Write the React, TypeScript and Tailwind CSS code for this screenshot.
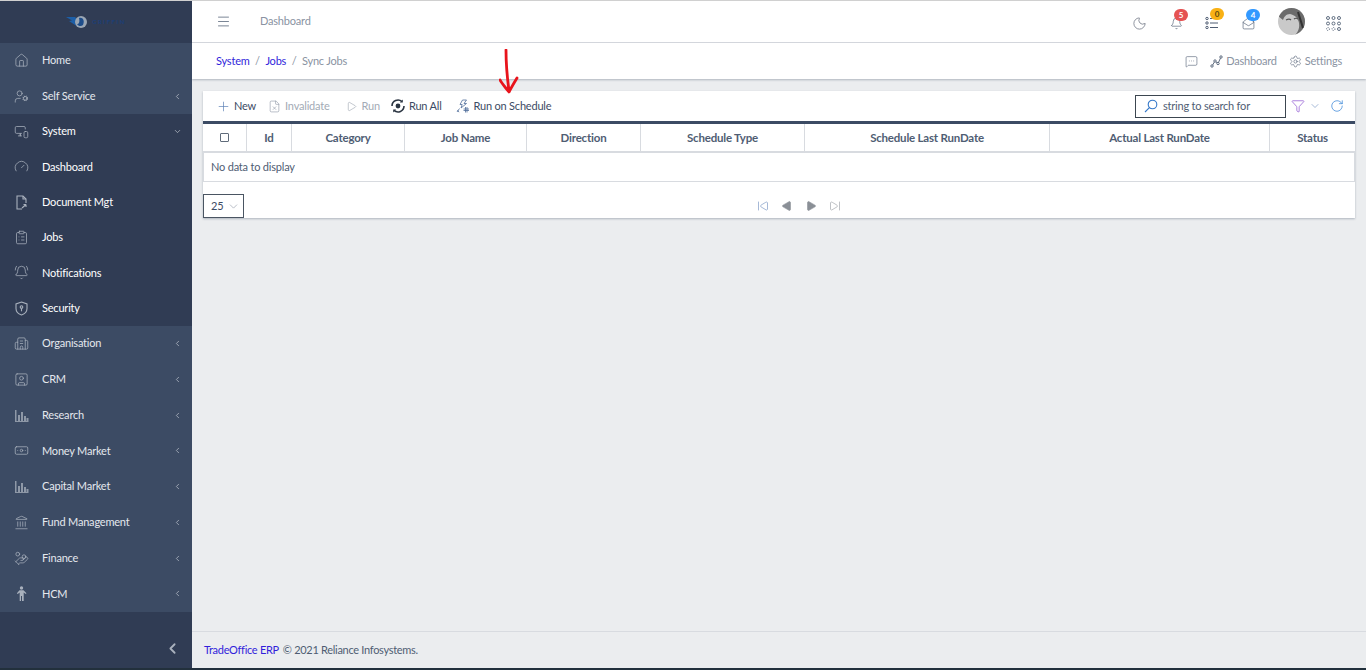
import {
  Banknote,
  Bell,
  BellRing,
  Building2,
  ChevronDown,
  ChevronLeft,
  ClipboardList,
  Filter,
  Gauge,
  Home,
  Landmark,
  MailOpen,
  Menu,
  MessageSquareMore,
  MonitorSmartphone,
  Moon,
  Play,
  Plus,
  RotateCw,
  Settings,
  SkipBack,
  SkipForward,
  SquareUser,
  UserCog,
  FileX,
  HandCoins,
  type LucideIcon,
} from "lucide-react";
import type { ComponentType } from "react";

type IconProps = { size?: number; strokeWidth?: number; className?: string };
type NavIcon = LucideIcon | ComponentType<IconProps>;

// bar chart with solid columns, used by Research and Capital Market
function BarsIcon({ size = 15, className }: IconProps) {
  return (
    <svg width={size} height={size} viewBox="0 0 15 15" className={className} fill="currentColor" fillOpacity="0.75">
      <rect x="1" y="2" width="1.5" height="11" />
      <rect x="4" y="7" width="2" height="6" />
      <rect x="7" y="4" width="2" height="9" />
      <rect x="10" y="8" width="2" height="5" />
      <rect x="12.5" y="10" width="2" height="3" />
      <rect x="1" y="13" width="13.5" height="1" />
    </svg>
  );
}

function PersonIcon({ size = 15, className }: IconProps) {
  return (
    <svg width={size} height={size} viewBox="0 0 15 15" className={className} fill="currentColor">
      <circle cx="7.5" cy="2" r="1.7" />
      <path d="M5.5 4.2h4l3 3-.8.8-2-1.5V15H8V10H7v5H5.7V6.5l-2 1.5-.8-.8z" />
    </svg>
  );
}

function DocumentIcon({ size = 15, className }: IconProps) {
  return (
    <svg width={size} height={size} viewBox="0 0 15 15" className={className} fill="none" stroke="currentColor" strokeWidth="1.1">
      <path d="M8 14H3V1h6l3 3v4" />
      <path d="M9 1v3h3M8 13l4-3.500M12 9.500v2.500M12 9.500H9.500" />
    </svg>
  );
}

function ShieldKeyIcon({ size = 15, className }: IconProps) {
  return (
    <svg width={size} height={size} viewBox="0 0 15 15" className={className} fill="none" stroke="currentColor" strokeWidth="1.1">
      <path d="M7.500 1l5.500 2v4.500c0 3.200-2.500 5.500-5.500 6.500C4.500 13 2 10.700 2 7.500V3z" />
      <circle cx="7.500" cy="6" r="1.300" />
      <path d="M7.500 7.300v3" />
    </svg>
  );
}

function TasksIcon({ className }: IconProps) {
  return (
    <svg width="14" height="14" viewBox="0 0 14 14" fill="none" stroke="currentColor" strokeWidth="1" className={className}>
      <circle cx="2" cy="2.500" r="1.200" />
      <circle cx="2" cy="7" r="1.200" />
      <circle cx="2" cy="11.500" r="1.200" />
      <path d="M5 2.500h8M5 7h8M5 11.500h8" />
    </svg>
  );
}

function RunAllIcon({ className }: IconProps) {
  return (
    <svg width="14" height="14" viewBox="0 0 14 14" fill="none" className={className}>
      <circle cx="7" cy="7" r="2.400" fill="currentColor" />
      <path d="M1 7a6 6 0 0 1 10-4.400M13 7a6 6 0 0 1-10 4.400" stroke="currentColor" strokeWidth="1.600" />
      <path d="M11.800.6v3h-3zM2.200 13.400v-3h3z" fill="currentColor" />
    </svg>
  );
}

function ScheduleIcon({ className }: IconProps) {
  return (
    <svg width="14" height="14" viewBox="0 0 14 14" fill="none" stroke="currentColor" strokeWidth="0.8" className={className}>
      <path d="M6.500 1h4L8 4.500h2.500L5 9l1.200-3.500H4z" />
      <path d="M1 13l2.500-3.500M3 13.200L1.500 11" />
      <path d="M9.500 8v5.500M11 8v5.500M7.500 10h5.500M7.500 11.500h5.500" />
    </svg>
  );
}

function TilesIcon({ className }: IconProps) {
  return (
    <svg width="15" height="15" viewBox="0 0 15 15" fill="none" stroke="currentColor" strokeWidth="0.9" className={className}>
      {[2, 7.5, 13].map((y) =>
        [2, 7.5, 13].map((x) => <circle key={`${x}-${y}`} cx={x} cy={y} r="1.500" strokeDasharray={y === 13 && x < 13 ? "1 1" : undefined} />),
      )}
    </svg>
  );
}

function TrendIcon({ className }: IconProps) {
  return (
    <svg width="13" height="13" viewBox="0 0 13 13" fill="none" stroke="currentColor" strokeWidth="0.9" className={className}>
      <path d="M2 11l3-5 3 2.500L11 2" />
      <circle cx="2" cy="11" r="1.200" fill="#ffffff" />
      <circle cx="5" cy="6" r="1.200" fill="#ffffff" />
      <circle cx="8" cy="8.500" r="1.200" fill="#ffffff" />
      <circle cx="11" cy="2" r="1.200" fill="#ffffff" />
    </svg>
  );
}

function MagnifierIcon({ className }: IconProps) {
  return (
    <svg width="14" height="14" viewBox="0 0 14 14" fill="none" stroke="currentColor" strokeWidth="1.100" className={className}>
      <circle cx="8.500" cy="5.500" r="4.300" />
      <path d="M5.400 8.600L1 13" />
    </svg>
  );
}

interface NavItem {
  label: string;
  icon: NavIcon;
  light: boolean;
  arrow?: "left" | "down";
}

const navItems: NavItem[] = [
  { label: "Home", icon: Home, light: true },
  { label: "Self Service", icon: UserCog, light: true, arrow: "left" },
  { label: "System", icon: MonitorSmartphone, light: false, arrow: "down" },
  { label: "Dashboard", icon: Gauge, light: false },
  { label: "Document Mgt", icon: DocumentIcon, light: false },
  { label: "Jobs", icon: ClipboardList, light: false },
  { label: "Notifications", icon: BellRing, light: false },
  { label: "Security", icon: ShieldKeyIcon, light: false },
  { label: "Organisation", icon: Building2, light: true, arrow: "left" },
  { label: "CRM", icon: SquareUser, light: true, arrow: "left" },
  { label: "Research", icon: BarsIcon, light: true, arrow: "left" },
  { label: "Money Market", icon: Banknote, light: true, arrow: "left" },
  { label: "Capital Market", icon: BarsIcon, light: true, arrow: "left" },
  { label: "Fund Management", icon: Landmark, light: true, arrow: "left" },
  { label: "Finance", icon: HandCoins, light: true, arrow: "left" },
  { label: "HCM", icon: PersonIcon, light: true, arrow: "left" },
];

const columns = ["Id", "Category", "Job Name", "Direction", "Schedule Type", "Schedule Last RunDate", "Actual Last RunDate", "Status"];

function Logo() {
  return (
    <div className="flex items-center gap-1">
      <svg width="22" height="14" viewBox="0 0 22 14">
        <path d="M0 2h9l3 3-3 3 3 4-6-4-3-2 3-.5z" fill="#1d5fa8" />
        <circle cx="15" cy="7" r="6" fill="#9aa6b4" />
        <path d="M13 3c4-1 6 3 4 7-2 2-5 1-6-1 2 0 3-2 2-6z" fill="#1e4d8a" />
      </svg>
      <span className="text-[6px] font-bold tracking-[1.5px] text-[#1b3f78]">GRIFFIN</span>
    </div>
  );
}

function Sidebar() {
  return (
    <aside className="flex w-[192px] shrink-0 flex-col bg-[#303c54] text-[11px] tracking-[-0.2px]">
      <div className="flex h-[41.5px] shrink-0 items-center justify-center">
        <Logo />
      </div>
      {navItems.map((item) => {
        const Icon = item.icon;
        return (
          <div
            key={item.label}
            className={`flex shrink-0 items-center pl-[14px] pr-[10px] ${
              item.light ? "h-[35.75px] bg-[#3c4b64] text-[#e4e8ee]" : "h-[35.3px] bg-[#303c54] text-white"
            }`}
          >
            <Icon size={15} strokeWidth={1.2} className="text-[#a9b1bd]" />
            <span className="ml-[13px] flex-1">{item.label}</span>
            {item.arrow === "left" && <ChevronLeft size={9} strokeWidth={1.8} className="text-[#c4cad3]" />}
            {item.arrow === "down" && <ChevronDown size={9} strokeWidth={1.8} className="text-[#c4cad3]" />}
          </div>
        );
      })}
      <div className="mt-auto flex h-[54px] items-center justify-end pr-[11px] pt-[14px]">
        <ChevronLeft size={17} strokeWidth={2.5} className="text-[#a9b1bd]" />
      </div>
    </aside>
  );
}

function Badge({ value, color, dark }: { value: string; color: string; dark?: boolean }) {
  return (
    <span
      className={`absolute -right-[5px] -top-[8px] flex h-[12px] w-[14px] items-center justify-center rounded-full text-[8px] font-bold ${color} ${
        dark ? "text-[#5c4a10]" : "text-white"
      }`}
    >
      {value}
    </span>
  );
}

function Avatar() {
  return (
    <div className="relative ml-[23px] h-[27px] w-[27px] overflow-hidden rounded-full bg-[#c9c9c9]">
      <svg width="27" height="27" viewBox="0 0 27 27">
        <path d="M27 0v27H17c2-2 5-6 4-12-1-5-4-8-9-9C8 6 6 9 5 12L0 8V0z" fill="#6b6b6b" />
        <path d="M8 12c2-1 4-1 5 0M16 11c1-1 3-1 4 0" stroke="#555555" strokeWidth="1.2" fill="none" />
        <path d="M20 4l5 16" stroke="#333333" strokeWidth="2" fill="none" />
      </svg>
    </div>
  );
}

function Header() {
  return (
    <header className="flex h-[42px] shrink-0 items-center border-b border-[#d8dbe0] bg-white pl-[24px] pr-[25px]">
      <Menu size={15} strokeWidth={1.2} className="text-[#4f5d73]" />
      <span className="ml-[29px] flex-1 text-[11px] tracking-[-0.2px] text-[#8a93a2]">Dashboard</span>
      <Moon size={15} strokeWidth={1.2} className="mt-[4px] -ml-[1px] text-[#6b7280]" />
      <div className="relative ml-[23px] mt-[3px]">
        <Bell size={13} strokeWidth={1.2} className="text-[#4f5d73]" />
        <Badge value="5" color="bg-[#e55353]" />
      </div>
      <div className="relative ml-[22px] mt-[3px]">
        <TasksIcon className="text-[#4f5d73]" />
        <Badge value="0" color="bg-[#f9b115]" dark />
      </div>
      <div className="relative ml-[23px] mt-[3px]">
        <MailOpen size={13} strokeWidth={1.2} className="text-[#4f5d73]" />
        <Badge value="4" color="bg-[#3399ff]" />
      </div>
      <Avatar />
      <TilesIcon className="ml-[21px] mt-[3px] text-[#4f5d73]" />
    </header>
  );
}

function Breadcrumb() {
  return (
    <div className="flex h-[36px] shrink-0 items-center bg-white pl-[24px] pr-[24px] text-[11px] tracking-[-0.2px] shadow-[0_1px_2px_rgba(60,75,100,0.35)]">
      <span className="text-[#321fdb]">System</span>
      <span className="mx-[5.5px] text-[#8a93a2]">/</span>
      <span className="text-[#321fdb]">Jobs</span>
      <span className="mx-[5.5px] text-[#8a93a2]">/</span>
      <span className="flex-1 text-[#8a93a2]">Sync Jobs</span>
      <MessageSquareMore size={13} strokeWidth={1.1} className="text-[#4f5d73]" />
      <TrendIcon className="ml-[12px] text-[#4f5d73]" />
      <span className="ml-[3px] text-[#8a93a2]">Dashboard</span>
      <Settings size={13} strokeWidth={1.1} className="ml-[12px] text-[#4f5d73]" />
      <span className="ml-[3px] text-[#8a93a2]">Settings</span>
    </div>
  );
}

function Toolbar() {
  return (
    <div className="flex h-[30px] items-center pl-[13px] pr-[11px] text-[11px] tracking-[-0.2px] text-[#3c4b64]">
      <Plus size={15} strokeWidth={1.1} className="text-[#5b7fb5]" />
      <span className="ml-[3px]">New</span>
      <FileX size={13} strokeWidth={1.1} className="ml-[12px] text-[#8a93a2]" />
      <span className="ml-[4px] text-[#a3abb6]">Invalidate</span>
      <Play size={11} strokeWidth={1.1} className="ml-[16px] text-[#8a93a2]" />
      <span className="ml-[5px] text-[#a3abb6]">Run</span>
      <RunAllIcon className="ml-[11px] text-[#2b3542]" />
      <span className="ml-[4px]">Run All</span>
      <ScheduleIcon className="ml-[14px] text-[#4f6d9a]" />
      <span className="ml-[4px]">Run on Schedule</span>
      <div className="ml-auto flex h-[23px] w-[151px] items-center border border-[#3c4650] pl-[8px] text-[#4f5d73]">
        <MagnifierIcon className="text-[#3578c9]" />
        <span className="ml-[5px]">string to search for</span>
      </div>
      <Filter size={14} strokeWidth={1.2} className="ml-[5px] text-[#8a4fd0]" />
      <ChevronDown size={12} strokeWidth={1.1} className="ml-[4px] text-[#5b7fb5]" />
      <RotateCw size={14} strokeWidth={1.2} className="ml-[9px] text-[#2f7fd6]" />
    </div>
  );
}

function JobsTable() {
  return (
    <div className="border-t-[3px] border-[#3c4b64] text-[11px] tracking-[-0.2px]">
      <div className="grid h-[29px] grid-cols-[43px_45px_113px_122px_114px_164px_245px_220px_1fr] border-b-2 border-[#d8dbe0] text-[11.5px] font-bold text-[#4f5d73]">
        <div className="flex items-center justify-center">
          <span className="h-[9px] w-[9px] rounded-[1px] border border-[#5f6b7a]" />
        </div>
        {columns.map((col) => (
          <div key={col} className="flex items-center justify-center border-l border-[#d8dbe0]">
            {col}
          </div>
        ))}
      </div>
      <div className="flex h-[29px] items-center border-x border-b border-[#d8dbe0] pl-[7px] text-[#4f5d73]">No data to display</div>
    </div>
  );
}

function Pager() {
  return (
    <div className="flex h-[36px] items-end text-[11px] tracking-[-0.2px] text-[#3c4b64]">
      <div className="flex h-[24px] w-[41px] items-center border border-[#4a5562] pl-[7px]">
        25
        <ChevronDown size={13} strokeWidth={1.1} className="ml-[4px] text-[#8a93a2]" />
      </div>
      <div className="mb-[6px] ml-[513px] flex items-center gap-[12px] text-[#8a8f96]">
        <SkipBack size={12} strokeWidth={1.1} className="text-[#5b7fb5]" />
        <Play size={12} strokeWidth={1.1} className="rotate-180 fill-[#8a8f96]" />
        <Play size={12} strokeWidth={1.1} className="fill-[#8a8f96]" />
        <SkipForward size={12} strokeWidth={1.1} />
      </div>
    </div>
  );
}

function RedArrow() {
  return (
    <svg width="20" height="46" viewBox="0 0 20 46" className="absolute left-[296px] top-[-42px]" fill="none">
      <path d="M7 1c0 12 1 26 3 41M1 31c2 4 6 8 9 12 2-4 5-9 8-14" stroke="#e8141c" strokeWidth="2.800" strokeLinecap="round" strokeLinejoin="round" />
    </svg>
  );
}

export default function App() {
  return (
    <div className="flex h-[670px] flex-col overflow-hidden bg-[#ebedef] font-['Lato',sans-serif]">
      <div className="h-px shrink-0 bg-[#d0d0d0]" />
      <div className="flex min-h-0 flex-1">
        <Sidebar />
        <main className="flex min-w-0 flex-1 flex-col">
          <Header />
          <Breadcrumb />
          <div className="flex-1 px-[11px] pt-[12px]">
            <div className="relative bg-white shadow-[0_1px_2px_rgba(60,75,100,0.35)]">
              <RedArrow />
              <Toolbar />
              <JobsTable />
              <Pager />
            </div>
          </div>
          <footer className="flex h-[37px] shrink-0 items-center border-t border-[#d8dbe0] bg-[#ebedef] pl-[12px] text-[11px] tracking-[-0.3px] text-[#4f5d73]">
            <span className="text-[#321fdb]">TradeOffice ERP</span>
            <span className="ml-[4px]">© 2021 Reliance Infosystems.</span>
          </footer>
        </main>
      </div>
      <div className="h-[2px] shrink-0 bg-[#22303c]" />
    </div>
  );
}
